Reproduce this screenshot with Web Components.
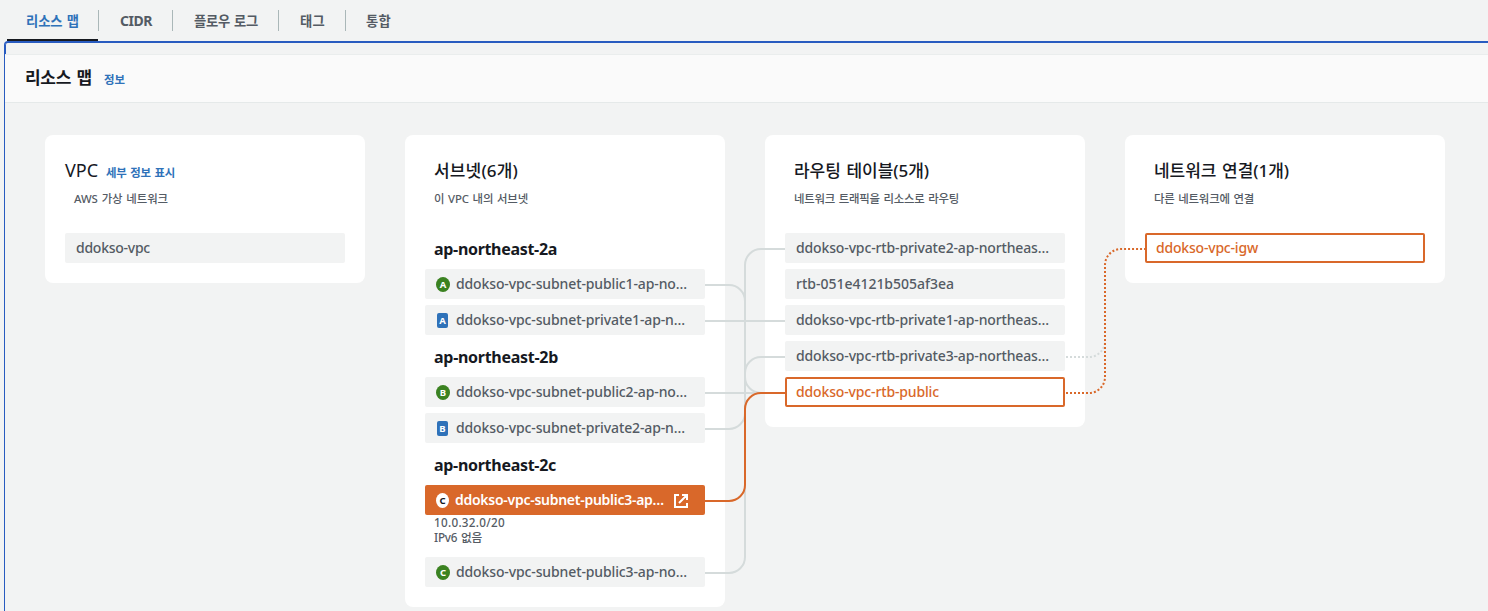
<!DOCTYPE html>
<html lang="ko">
<head>
<meta charset="utf-8">
<title>VPC 리소스 맵</title>
<style>
body { margin: 0; background: #f2f3f3; font-family: "Noto Sans", "Noto Sans CJK KR", sans-serif; color: #16191f; overflow: hidden; }
</style>
</head>
<body>
<vpc-page></vpc-page>
<script>
function define(name, html, setup) {
  const template = document.createElement('template');
  template.innerHTML = html;
  customElements.define(name, class extends HTMLElement {
    constructor() {
      super();
      this.attachShadow({ mode: 'open' }).append(template.content.cloneNode(true));
    }
    connectedCallback() { if (setup) setup(this, this.shadowRoot); }
  });
}

/* Label whose tracking is adjusted so that it fills a given measure. */
define('fit-label', `<style>:host{display:inline-block;white-space:nowrap} span{display:inline-block;white-space:pre;word-spacing:.08em}</style><span><slot></slot></span>`, (el, root) => {
  const span = root.querySelector('span');
  const target = parseFloat(el.getAttribute('measure'));
  const n = el.textContent.length;
  const natural = span.getBoundingClientRect().width;
  if (target && natural) {
    span.style.letterSpacing = ((target - natural) / n).toFixed(3) + 'px';
    el.style.width = target + 'px';
  }
});

define('tab-item', `<style>
:host{display:block;height:41px;box-sizing:border-box;padding-top:10px;font-size:13.3px;font-weight:700;color:#545b64}
div{height:21px;line-height:23px;box-sizing:border-box;border-right:1px solid #aab7b8;padding:0 20px 0 21px}
:host([latin]){font-size:14px}
:host([latin]) div{line-height:21px}
:host([active]){color:#2f72b9;border-bottom:2px solid #16191f;margin-right:1px}
:host([active]) div{padding:0 19px;margin-right:-1px}
:host([last]) div{border:0;padding-left:20px}
</style><div><slot></slot></div>`);

define('zone-badge', `<style>
:host{display:flex;align-items:center;justify-content:center;flex:none;font:bold 9.5px/15px "Noto Sans",sans-serif;color:#fff;width:14px;height:15px;background:#3b8221;border-radius:50%}
:host([kind=private]){width:11px;background:#2f72b9;border-radius:2px}
:host([kind=selected]){width:13px;background:#fff;color:#16191f}
</style><slot></slot>`);

define('resource-item', `<style>
:host{display:flex;align-items:center;height:30px;box-sizing:border-box;background:#f2f3f3;border-radius:2px;padding:0 11px;font-size:14px;line-height:30px;font-weight:500;color:#545b64}
:host([linked]){background:#fff;border:2px solid #d9682a;padding:0 9px;color:#d9682a;line-height:26px}
:host([selected]){background:#d9682a;color:#fff;font-weight:600}
.text{display:block;height:30px}
:host([linked]) .text{height:26px}
::slotted(zone-badge){margin-right:6px}
::slotted(zone-badge[kind=private]){margin:0 8px 0 1px}
svg{display:none;margin-left:auto;margin-right:6px;margin-top:1px}
:host([selected]) svg{display:block}
</style><slot name="badge"></slot><span class="text"><slot></slot></span>
<svg width="14" height="14" viewBox="0 0 14 14" fill="none" stroke="#fff" stroke-width="2"><path d="M5 1H1v12h12V9M8 1H13v5M12.5 1.5L5 9"/></svg>`);

define('zone-title', `<style>:host{display:block;height:30px;line-height:33px;padding-left:9px;font-size:16px;font-weight:700;color:#16191f}</style><slot></slot>`);

define('resource-details', `<style>:host{display:block;height:36px;box-sizing:border-box;margin:-6px 0 0;padding:0 0 0 9px;font-size:11.7px;font-weight:500;line-height:15px;color:#545b64} ::slotted(div){height:15px}</style><slot></slot>`);

define('resource-card', `<style>
:host{display:block;background:#fff;border-radius:8px;padding:24px 20px 20px;box-sizing:border-box}
header{height:74px}
h2{margin:0;height:24px;line-height:23px;padding-left:9px;font-weight:500;font-size:17px;display:flex;align-items:baseline;gap:8px}
:host([root]) h2{padding-left:0;font-size:18px;font-weight:400}
p{margin:0;padding:6px 0 0 9px;height:20px;line-height:20px;font-size:11.4px;font-weight:500;color:#545b64}
.list{display:flex;flex-direction:column;gap:6px}
</style><header><h2><slot name="title"></slot><slot name="link"></slot></h2><p><slot name="description"></slot></p></header><div class="list"><slot></slot></div>`);

/* Connectors between subnets, route tables and gateways; drawn above the cards. */
define('map-connectors', `<style>:host{position:absolute;inset:0;pointer-events:none} svg{display:block}</style>
<svg width="1483" height="508" viewBox="5 103 1483 508" fill="none" stroke-width="2">
<g stroke="#d5dbdb">
<path d="M705 285H729A16 16 0 0 1 745 301V377A16 16 0 0 0 761 393H785"/>
<path d="M705 321H785M705 393H785"/>
<path d="M705 429H729A16 16 0 0 0 745 413V265A16 16 0 0 1 761 249H785"/>
<path d="M705 573H729A16 16 0 0 0 745 557V373A16 16 0 0 1 761 357H785"/>
<path d="M1066 357H1089A16 16 0 0 0 1105 341" stroke-dasharray="2 2"/>
</g>
<g stroke="#d9682a">
<path d="M705 501H729A16 16 0 0 0 745 485V409A16 16 0 0 1 761 393H785"/>
<path d="M1066 393H1089A16 16 0 0 0 1105 377V265A16 16 0 0 1 1121 249H1145" stroke-dasharray="2 2"/>
</g></svg>`);

define('vpc-page', `<style>
:host{display:block;height:611px;overflow:hidden}
nav{display:flex;height:41px;padding-left:7px}
main{height:570px;margin-left:4px;box-sizing:border-box;border-top:2px solid #285bc0;border-left:1px solid #285bc0;border-radius:4px 0 0 0}
.strip{height:11px;box-sizing:border-box;border-left:1px solid #285bc0;border-top-left-radius:2px}
.bar{height:49px;box-sizing:border-box;border-top:1px solid #eaeded;border-bottom:1px solid #e5e9e9;background:#fafafa;padding-left:20px;display:flex;align-items:baseline;gap:12px;line-height:45px}
h1{margin:0;font-size:17px;font-weight:700}
.info{font-size:11.4px;font-weight:700;color:#2f72b9}
.map{position:relative;height:508px;box-sizing:border-box;padding:32px 43px 0 40px;display:grid;grid-template-columns:repeat(4,320px);gap:40px;align-items:start}
</style>
<nav>
<tab-item active><fit-label measure="53">리소스 맵</fit-label></tab-item>
<tab-item latin><fit-label measure="32">CIDR</fit-label></tab-item>
<tab-item><fit-label measure="64">플로우 로그</fit-label></tab-item>
<tab-item><fit-label measure="25">태그</fit-label></tab-item>
<tab-item last><fit-label measure="25">통합</fit-label></tab-item>
</nav>
<main>
<div class="strip"></div>
<div class="bar"><h1><fit-label measure="67">리소스 맵</fit-label></h1><fit-label class="info" measure="21">정보</fit-label></div>
<div class="map">
<resource-card root>
<fit-label slot="title" measure="33">VPC</fit-label><fit-label slot="link" class="info" measure="69">세부 정보 표시</fit-label>
<fit-label slot="description" measure="94">AWS 가상 네트워크</fit-label>
<resource-item><fit-label measure="74">ddokso-vpc</fit-label></resource-item>
</resource-card>
<resource-card>
<fit-label slot="title" measure="84">서브넷(6개)</fit-label>
<fit-label slot="description" measure="94">이 VPC 내의 서브넷</fit-label>
<zone-title><fit-label measure="123">ap-northeast-2a</fit-label></zone-title>
<resource-item><zone-badge slot="badge">A</zone-badge><fit-label measure="231">ddokso-vpc-subnet-public1-ap-no…</fit-label></resource-item>
<resource-item><zone-badge slot="badge" kind="private">A</zone-badge><fit-label measure="229">ddokso-vpc-subnet-private1-ap-n…</fit-label></resource-item>
<zone-title><fit-label measure="124">ap-northeast-2b</fit-label></zone-title>
<resource-item><zone-badge slot="badge">B</zone-badge><fit-label measure="231">ddokso-vpc-subnet-public2-ap-no…</fit-label></resource-item>
<resource-item><zone-badge slot="badge" kind="private">B</zone-badge><fit-label measure="229">ddokso-vpc-subnet-private2-ap-n…</fit-label></resource-item>
<zone-title><fit-label measure="122">ap-northeast-2c</fit-label></zone-title>
<resource-item selected><zone-badge slot="badge" kind="selected">C</zone-badge><fit-label measure="209">ddokso-vpc-subnet-public3-ap…</fit-label></resource-item>
<resource-details><div><fit-label measure="71">10.0.32.0/20</fit-label></div><div><fit-label measure="48">IPv6 없음</fit-label></div></resource-details>
<resource-item><zone-badge slot="badge">C</zone-badge><fit-label measure="231">ddokso-vpc-subnet-public3-ap-no…</fit-label></resource-item>
</resource-card>
<resource-card>
<fit-label slot="title" measure="135">라우팅 테이블(5개)</fit-label>
<fit-label slot="description" measure="165">네트워크 트래픽을 리소스로 라우팅</fit-label>
<resource-item><fit-label measure="253">ddokso-vpc-rtb-private2-ap-northeas…</fit-label></resource-item>
<resource-item><fit-label measure="158">rtb-051e4121b505af3ea</fit-label></resource-item>
<resource-item><fit-label measure="253">ddokso-vpc-rtb-private1-ap-northeas…</fit-label></resource-item>
<resource-item><fit-label measure="253">ddokso-vpc-rtb-private3-ap-northeas…</fit-label></resource-item>
<resource-item linked><fit-label measure="143">ddokso-vpc-rtb-public</fit-label></resource-item>
</resource-card>
<resource-card>
<fit-label slot="title" measure="135">네트워크 연결(1개)</fit-label>
<fit-label slot="description" measure="100">다른 네트워크에 연결</fit-label>
<resource-item linked><fit-label measure="102">ddokso-vpc-igw</fit-label></resource-item>
</resource-card>
<map-connectors></map-connectors>
</div>
</main>`);
</script>
</body>
</html>
